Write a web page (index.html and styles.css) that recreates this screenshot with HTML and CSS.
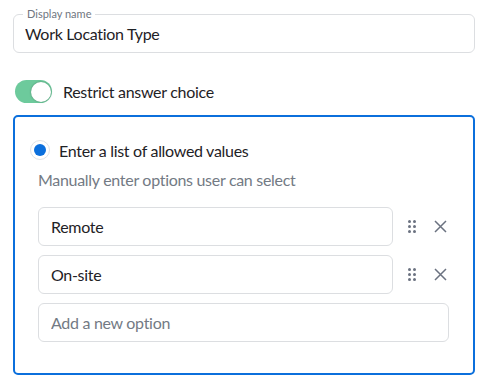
FILE: index.html
```html
<!DOCTYPE html>
<html lang="en">
<head>
  <meta charset="UTF-8">
  <meta name="viewport" content="width=device-width, initial-scale=1.0">
  <title>Field settings</title>
  <link rel="stylesheet" href="styles.css">
</head>
<body>
  <div class="panel">
    <div class="field">
      <span class="field-label">Display name</span>
      <input class="field-input" type="text" value="Work Location Type">
    </div>

    <label class="toggle-row">
      <span class="toggle on"><span class="knob"></span></span>
      <span>Restrict answer choice</span>
    </label>

    <div class="choices">
      <label class="radio-row">
        <span class="radio"><span class="dot"></span></span>
        <span>Enter a list of allowed values</span>
      </label>
      <p class="hint">Manually enter options user can select</p>

      <div class="option-row">
        <input class="option" type="text" value="Remote">
        <span class="drag">
          <svg width="8" height="13" viewBox="0 0 8 13"><g fill="#6b7280"><circle cx="1.5" cy="1.5" r="1.5"/><circle cx="6.5" cy="1.5" r="1.5"/><circle cx="1.5" cy="6.5" r="1.5"/><circle cx="6.5" cy="6.5" r="1.5"/><circle cx="1.5" cy="11.5" r="1.5"/><circle cx="6.5" cy="11.5" r="1.5"/></g></svg>
        </span>
        <span class="remove">
          <svg width="13" height="13" viewBox="0 0 13 13"><path d="M1 1L12 12M12 1L1 12" stroke="#6b7280" stroke-width="1.5" fill="none"/></svg>
        </span>
      </div>

      <div class="option-row">
        <input class="option" type="text" value="On-site">
        <span class="drag">
          <svg width="8" height="13" viewBox="0 0 8 13"><g fill="#6b7280"><circle cx="1.5" cy="1.5" r="1.5"/><circle cx="6.5" cy="1.5" r="1.5"/><circle cx="1.5" cy="6.5" r="1.5"/><circle cx="6.5" cy="6.5" r="1.5"/><circle cx="1.5" cy="11.5" r="1.5"/><circle cx="6.5" cy="11.5" r="1.5"/></g></svg>
        </span>
        <span class="remove">
          <svg width="13" height="13" viewBox="0 0 13 13"><path d="M1 1L12 12M12 1L1 12" stroke="#6b7280" stroke-width="1.5" fill="none"/></svg>
        </span>
      </div>

      <div class="option-row new">
        <input class="option" type="text" placeholder="Add a new option">
      </div>
    </div>
  </div>
</body>
</html>
```

FILE: styles.css
```css
body {
  margin: 0;
  font-family: Lato, "Open Sans", sans-serif;
  color: #1f2226;
  background: white;
}

.panel {
  padding: 14px 12px 0 13px;
  font-size: 16px;
  letter-spacing: -0.3px;
}

.field {
  position: relative;
}

.field-label {
  position: absolute;
  top: -7px;
  left: 10px;
  padding: 0 4px;
  background: white;
  font-size: 11px;
  line-height: 14px;
  letter-spacing: 0;
  color: #6f7680;
}

input {
  -webkit-appearance: none;
  appearance: none;
  outline: none;
  box-sizing: border-box;
  font-family: inherit;
  font-size: inherit;
  letter-spacing: inherit;
  color: inherit;
}

.field-input {
  width: 100%;
  height: 39px;
  padding: 0 11px;
  border: 1px solid #dcdee1;
  border-radius: 6px;
}

.toggle-row {
  display: flex;
  align-items: center;
  gap: 11px;
  margin: 27px 0 0 2px;
}

.toggle {
  display: flex;
  align-items: center;
  justify-content: flex-end;
  box-sizing: border-box;
  width: 37px;
  height: 23px;
  padding: 0 1px;
  border-radius: 12px;
  background: #6dca9c;
}

.knob {
  width: 20px;
  height: 20px;
  border-radius: 50%;
  background: white;
  box-shadow: 0 0 2px rgba(0, 0, 0, 0.35);
}

.choices {
  margin-top: 12px;
  height: 260px;
  box-sizing: border-box;
  padding: 23px 24px 0 15px;
  border: 2px solid #0b6fdc;
  border-radius: 5px;
}

.radio-row {
  display: flex;
  align-items: center;
  gap: 9px;
}

.radio {
  display: flex;
  align-items: center;
  justify-content: center;
  box-sizing: border-box;
  width: 20px;
  height: 20px;
  border: 1px solid #e1e3e6;
  border-radius: 50%;
}

.dot {
  width: 12px;
  height: 12px;
  border-radius: 50%;
  background: #0b6fdc;
}

.hint {
  margin: 10px 0 17px 8px;
  line-height: 20px;
  color: #737a84;
}

.option-row {
  display: flex;
  align-items: center;
  margin: 0 0 9px 8px;
}

.option {
  flex: 1;
  height: 39px;
  padding: 0 12px;
  border: 1px solid #dcdee1;
  border-radius: 6px;
}

.option::placeholder {
  color: #737a84;
}

.drag {
  display: flex;
  margin-left: 15px;
}

.remove {
  display: flex;
  margin: 0 2px 0 18px;
}
```
